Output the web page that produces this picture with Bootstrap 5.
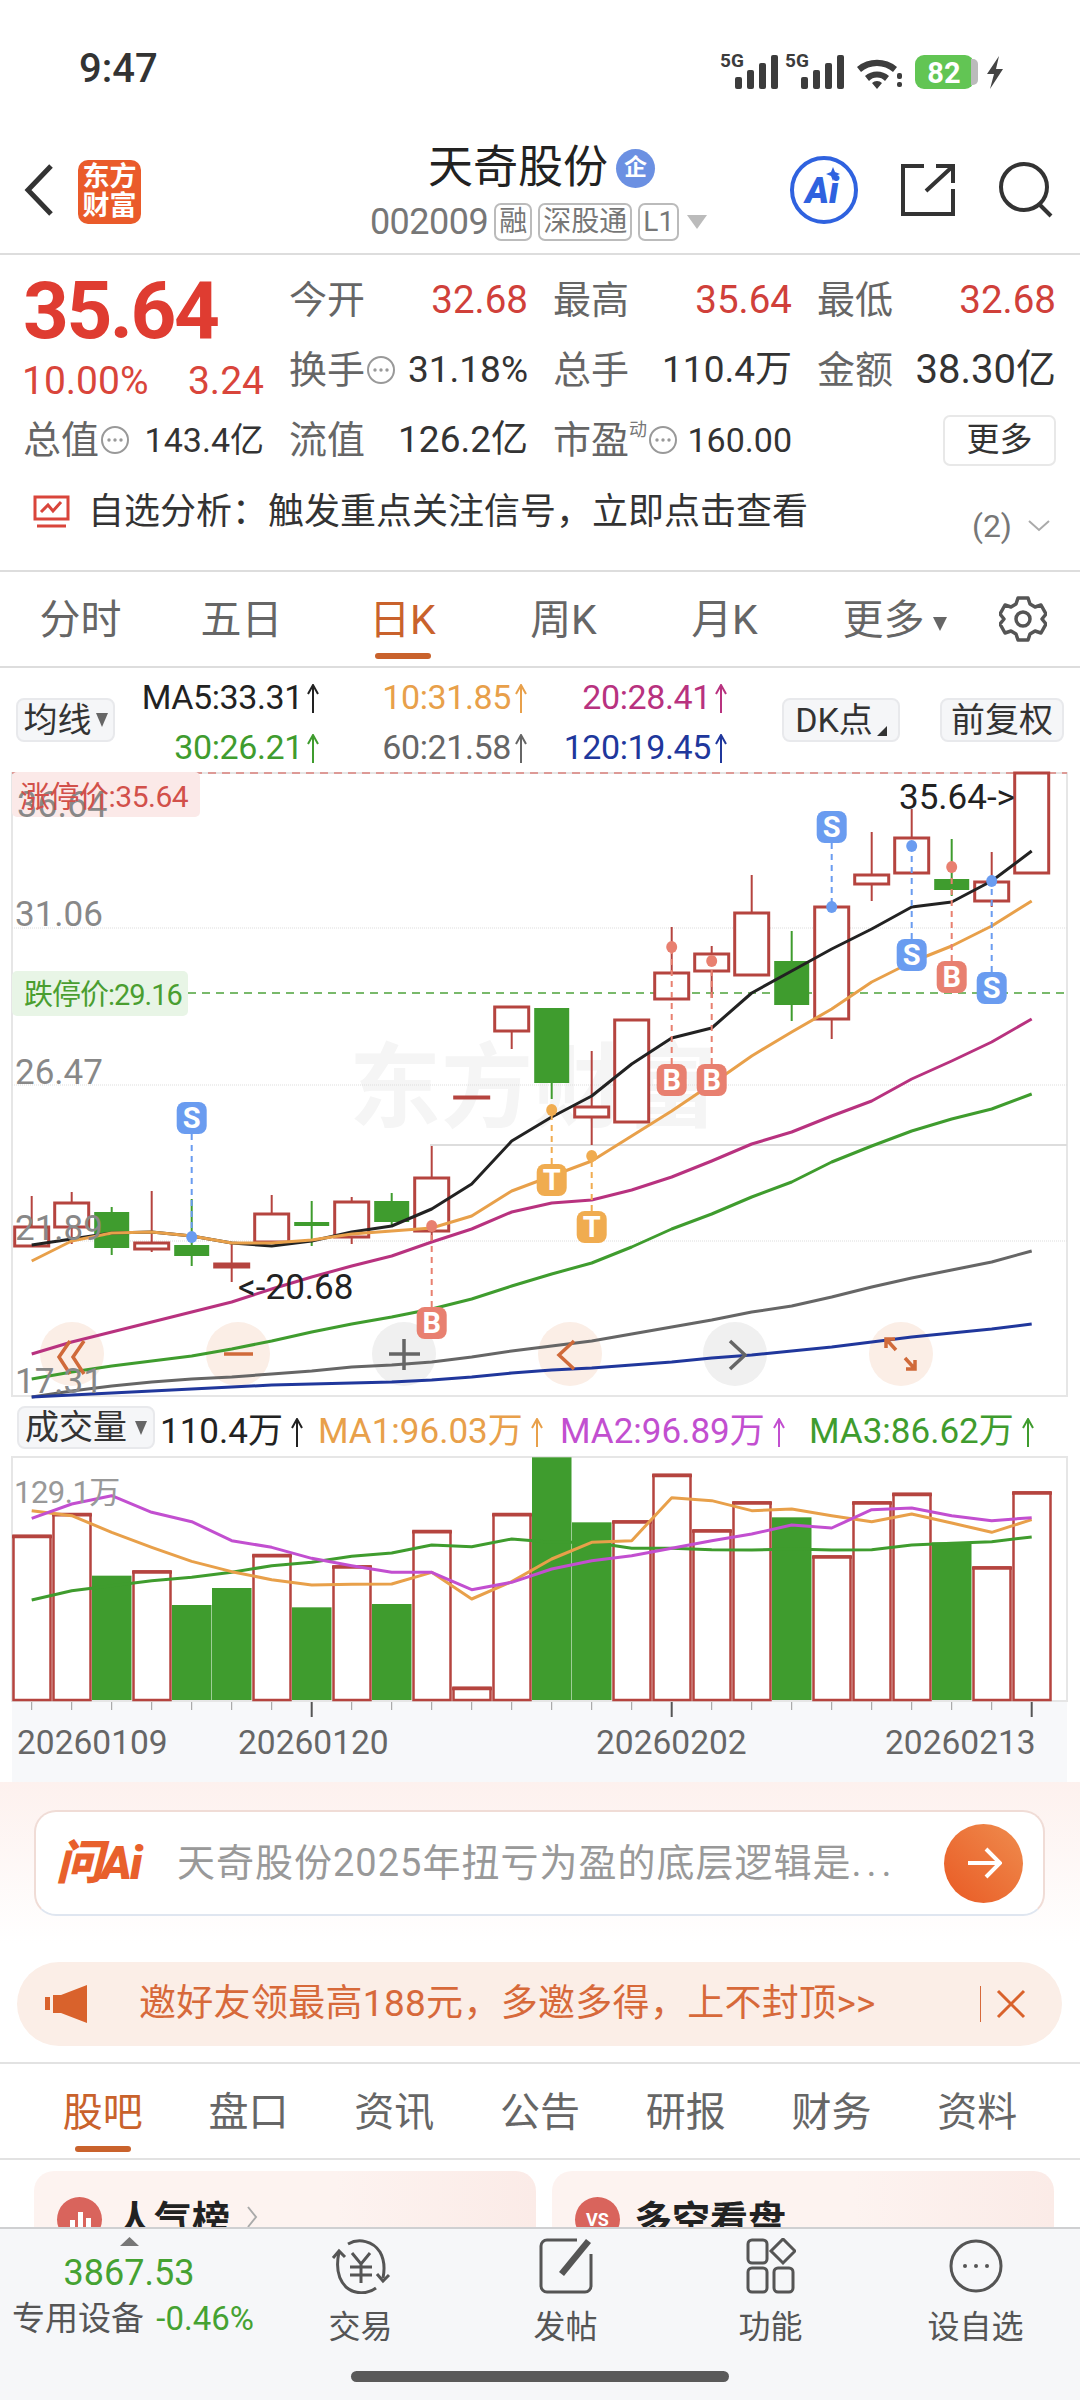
<!DOCTYPE html>
<html lang="zh-CN">
<head>
    <meta charset="UTF-8">
    <meta name="viewport" content="width=device-width, initial-scale=1">
    <title>天奇股份</title>
    <link href="https://cdn.jsdelivr.net/npm/bootstrap@5.3.0/dist/css/bootstrap.min.css" rel="stylesheet">
    <style>
        html, body { width: 1080px; height: 2400px; overflow: hidden; background: #fff; }
        body { font-family: Roboto, "Noto Sans CJK SC", sans-serif; color: #333; position: relative; }
        .status-row { height: 138px; padding: 0 70px 0 79px; }
        .status-icons { overflow: visible; }
        .clock { font-size: 40px; font-weight: 500; color: #333; line-height: 1; }
        .head-row { height: 117px; border-bottom: 2px solid #ddd; }
        .head-side { flex: 1 1 0; }
        .head-tools { padding: 0 27px 12px 0; gap: 41px; }
        .brand-logo { width: 63px; height: 64px; border-radius: 10px; background: #ea5b2a; color: #fff; font-size: 27px; font-weight: 700; line-height: 29px; text-align: center; padding-top: 3px; margin-left: 24px; margin-top: -8px; }
        .back-arrow { margin-top: -12px; }
        .title-line { margin: 4px 0 0 6px; }
        .stock-name { font-size: 45px; line-height: 52px; color: #222; }
        .ent-badge { width: 39px; height: 39px; border-radius: 50%; background: #6b90e2; color: #fff; font-size: 23px; font-weight: 700; margin-left: 8px; }
        .code-line { margin-top: 9px; }
        .stock-code { font-size: 36px; color: #777; line-height: 38px; letter-spacing: -.5px; }
        .code-tag { border: 2px solid #bbb; border-radius: 7px; font-size: 28px; color: #777; line-height: 34px; padding: 0 3px; margin-left: 6px; height: 38px; }
        .quote-grid { display: grid; grid-template-columns: 241px repeat(3, 239px); grid-template-rows: repeat(3, 70px); column-gap: 25px; padding: 10px 0 0 23px; }
        .price-block { grid-row: 1 / span 2; padding-top: 11px; }
        .last-price { font-size: 80px; font-weight: 700; color: #df3c31; line-height: 70px; letter-spacing: -2.500px; }
        .last-change { font-size: 39px; color: #d9453b; line-height: 50px; margin: 10px 0 0 -1px; }
        .stat-cell { font-size: 37px; white-space: nowrap; }
        .stat-label { color: #666; font-size: 38px; }
        .up-val { color: #d0403a; font-size: 38.500px; }
        .val-sm { font-size: 34px; }
        .val-lg { font-size: 40px; }
        .dim-icon { width: 30px; height: 30px; margin-left: 1px; color: #999; flex: none; }
        .more-btn { width: 114px; height: 51px; border: 2px solid #e8e8e8; border-radius: 7px; font-size: 33px; color: #333; margin-left: 126px; }
        .super-mark { font-size: 18px; color: #777; align-self: flex-start; margin-top: 4px; }
        .notice-row { height: 97px; padding: 0 30px 22px 33px; font-size: 36px; color: #333; border-bottom: 2px solid #ddd; }
        .notice-text { margin-left: 18px; }
        .notice-count { font-size: 32px; color: #777; margin: 28px 16px 0 0; }
        .notice-caret { margin-top: 28px; }
        .period-row { height: 96px; border-bottom: 2px solid #ddd; }
        .period-tab { width: 161px; font-size: 41px; color: #666; text-align: center; position: relative; line-height: 96px; }
        .period-tab.on { color: #c9622c; }
        .period-tab.on::after { content: ""; position: absolute; left: 50%; margin-left: -28px; bottom: 7px; width: 56px; height: 6px; border-radius: 3px; background: #c9622c; }
        .period-more { padding-left: 18px; white-space: nowrap; }
        .period-more svg { vertical-align: 3px; }
        .ma-row { height: 104px; padding: 0 16px; position: relative; }
        .pill-btn { background: #f5f6f8; border: 2px solid #e8e9ec; border-radius: 8px; font-size: 34px; color: #333; height: 44px; }
        .pill-ma { width: 99px; }
        .pill-dk { width: 118px; margin-left: 50px; }
        .pill-adj { width: 124px; margin-left: 40px; }
        .pill-vol { width: 138px; height: 43px; }
        .ma-values { width: 610px; margin-left: 7px; font-size: 34px; line-height: 50px; grid-template-columns: 202px 208px 200px; letter-spacing: -.4px; padding-top: 4px; }
        .ma-cell { white-space: nowrap; }
        .tall-arrow { width: 14px; height: 30px; vertical-align: -5px; margin-left: 3px; }
        .c-ma5 { color: #222; } .c-ma10 { color: #e8a04a; } .c-ma20 { color: #b8327f; }
        .c-ma30 { color: #3f9c2e; } .c-ma60 { color: #666; } .c-ma120 { color: #20379c; }
        .chart-frame { height: 625px; display: block; overflow: visible; }
        .vol-head { height: 59px; padding: 9px 0 0 17px; font-size: 35px; white-space: nowrap; }
        .vol-head .tall-arrow { margin-left: 7px; }
        .vol-now { margin-left: 5px; color: #222; width: 158px; }
        .vol-ma1 { color: #e8a04a; width: 242px; }
        .vol-ma2 { color: #c24fd0; width: 249px; }
        .vol-ma3 { color: #3f9c2e; }
        .chart-frame-vol { height: 326px; display: block; overflow: visible; }
        .ai-zone { height: 162px; padding: 28px 35px 0 34px; background: linear-gradient(#fdf1ee, #fff); }
        .ask-box { height: 106px; background: #fff; border: 2px solid #f0dcd6; border-bottom-color: #dfe6f0; border-radius: 22px; padding: 0 20px 0 20px; }
        .ask-logo { width: 96px; font-size: 47px; font-weight: 900; font-style: italic; color: #e8602c; letter-spacing: -2px; white-space: nowrap; }
        .ask-text { margin-left: 25px; font-size: 38px; color: #999; white-space: nowrap; letter-spacing: 1px; }
        .ask-dots { letter-spacing: 5px; }
        .ask-go { width: 79px; height: 79px; border-radius: 50%; background: linear-gradient(45deg, #e95a24, #ef8c4e); flex: none; }
        .promo-bar { height: 84px; margin: 18px 18px 0 17px; border-radius: 42px; background: #fbeee7; color: #d7693a; font-size: 37px; padding: 0 36px 0 28px; white-space: nowrap; }
        .promo-text { margin-left: 52px; letter-spacing: .3px; }
        .promo-sep { width: 1px; height: 36px; background: #d7693a; margin-right: 15px; }
        .info-tabs { margin-top: 16px; height: 98px; padding: 0 30px; border-top: 2px solid #e2e2e2; border-bottom: 2px solid #e2e2e2; }
        .info-tab { flex: 1 1 0; text-align: center; font-size: 40px; color: #666; position: relative; line-height: 98px; }
        .info-tab.on { color: #c9622c; }
        .info-tab.on::after { content: ""; position: absolute; left: 50%; margin-left: -28px; bottom: 6px; width: 56px; height: 6px; border-radius: 3px; background: #c9622c; }
        .promo-cards { padding: 11px 26px 0 34px; gap: 16px; }
        .promo-card { flex: 1 1 0; height: 120px; border-radius: 20px; background: linear-gradient(90deg, #fdf3f0 60%, #fbebe7); padding: 26px 0 0 23px; white-space: nowrap; }
        .card-dot { width: 45px; height: 45px; border-radius: 50%; background: #d9645c; color: #fff; font-size: 18px; font-weight: 700; margin-right: 14px; flex: none; }
        .card-title { font-size: 38px; font-weight: 700; color: #222; line-height: 46px; }
        .bottom-bar { position: absolute; left: 0; right: 0; bottom: 0; height: 173px; background: #f6f7f9; border-top: 2px solid #cfd0d2; }
        .index-mark { position: absolute; left: 120px; top: 8px; }
        .index-cell { width: 258px; text-align: center; white-space: nowrap; }
        .index-val { font-size: 36px; color: #45a232; line-height: 40px; margin-top: 24px; }
        .index-sub { font-size: 33px; color: #555; line-height: 44px; margin-top: 4px; padding-left: 8px; }
        .index-chg { color: #45a232; margin-left: 4px; }
        .bar-item { width: 205px; text-align: center; font-size: 32px; color: #555; }
        .bar-item svg { display: block; margin: 9px auto 9px; }
        .home-pill { position: absolute; left: 351px; bottom: 18px; width: 378px; height: 11px; border-radius: 6px; background: #5a5a5a; }
    </style>
</head>
<body>

    <svg width="0" height="0" class="position-absolute">
        <symbol id="dots" viewBox="0 0 30 30">
            <circle cx="15" cy="15" r="13" fill="none" stroke="currentColor" stroke-width="2"/>
            <circle cx="9" cy="15" r="1.7" fill="currentColor"/><circle cx="15" cy="15" r="1.7" fill="currentColor"/><circle cx="21" cy="15" r="1.7" fill="currentColor"/>
        </symbol>
        <symbol id="up" viewBox="0 0 14 30">
            <path d="M7 29V2M2 10 7 1l5 9" fill="none" stroke="currentColor" stroke-width="2"/>
        </symbol>
        <symbol id="bars" viewBox="0 0 44 34">
            <rect x="0" y="22" width="7" height="12" rx="2"/><rect x="12" y="15" width="7" height="19" rx="2"/><rect x="24" y="8" width="7" height="26" rx="2"/><rect x="36" y="0" width="7" height="34" rx="2"/>
        </symbol>
    </svg>

    <!-- status bar -->
    <div class="status-row d-flex align-items-center justify-content-between">
        <span class="clock">9:47</span>
        <svg class="status-icons" width="290" height="44" viewBox="720 44 290 44" fill="#3c3c3c">
            <text x="720" y="64" font-size="19" font-weight="700" font-family="Roboto">5G</text>
            <use href="#bars" x="735" y="52" width="44" height="34"/>
            <text x="785" y="64" font-size="19" font-weight="700" font-family="Roboto">5G</text>
            <use href="#bars" x="801" y="52" width="44" height="34"/>
            <path d="M857 64a31 31 0 0 1 40 0l-4 5a24 24 0 0 0-32 0zM865 73a18 18 0 0 1 24 0l-4 5a11 11 0 0 0-16 0zM872 80a7 7 0 0 1 10 0l-5 6z"/>
            <rect x="897" y="70" width="5" height="6" rx="2"/><rect x="897" y="79" width="5" height="5" rx="2"/>
            <rect x="915" y="52" width="59" height="34" rx="9" fill="#62c554"/>
            <path d="M971 56h2a5 5 0 0 1 5 5v16a5 5 0 0 1-5 5h-2z" fill="#bbb"/>
            <text x="944" y="80" font-size="29" font-weight="700" fill="#fff" text-anchor="middle" font-family="Roboto">82</text>
            <path d="M999 53 987 71h7l-4 15 13-20h-7z" fill="#444"/>
        </svg>
    </div>

    <!-- header -->
    <div class="head-row d-flex">
        <div class="head-side d-flex align-items-center ps-4">
            <svg class="back-arrow" width="30" height="52" viewBox="0 0 30 52"><path d="M27 2 4 26l23 24" fill="none" stroke="#333" stroke-width="5"/></svg>
            <div class="brand-logo">东方<br>财富</div>
        </div>
        <div class="d-flex flex-column align-items-center">
            <div class="title-line d-flex align-items-center">
                <span class="stock-name">天奇股份</span>
                <span class="ent-badge d-flex align-items-center justify-content-center">企</span>
            </div>
            <div class="code-line d-flex align-items-center">
                <span class="stock-code">002009</span>
                <span class="code-tag">融</span><span class="code-tag">深股通</span><span class="code-tag">L1</span>
                <svg class="ms-2" width="20" height="14" viewBox="0 0 20 14"><path d="M0 0h20L10 14z" fill="#bbb"/></svg>
            </div>
        </div>
        <div class="head-side head-tools d-flex align-items-center justify-content-end">
            <svg width="70" height="70" viewBox="0 0 70 70">
                <circle cx="35" cy="35" r="32" fill="none" stroke="#2f62df" stroke-width="4"/>
                <text x="33" y="48" font-size="36" font-weight="900" font-style="italic" fill="#2f62df" text-anchor="middle" font-family="Roboto">Ai</text>
                <path d="M44 12l2 5 5 2-5 2-2 5-2-5-5-2 5-2z" fill="#2f62df"/>
            </svg>
            <svg width="56" height="54" viewBox="0 0 56 54" fill="none" stroke="#333" stroke-width="4">
                <path d="M24 3H3v48h50V26M26 28 52 4M36 3h17v17"/>
            </svg>
            <svg width="56" height="56" viewBox="0 0 56 56" fill="none" stroke="#333" stroke-width="4">
                <circle cx="27" cy="25" r="23"/><path d="M42 42l12 12"/>
            </svg>
        </div>
    </div>

    <!-- quote -->
    <div class="quote-grid">
        <div class="price-block">
            <div class="last-price">35.64</div>
            <div class="last-change d-flex justify-content-between"><span>10.00%</span><span>3.24</span></div>
        </div>
        <div class="stat-cell d-flex align-items-center justify-content-between"><span class="stat-label">今开</span><span class="up-val">32.68</span></div>
        <div class="stat-cell d-flex align-items-center justify-content-between"><span class="stat-label">最高</span><span class="up-val">35.64</span></div>
        <div class="stat-cell d-flex align-items-center justify-content-between"><span class="stat-label">最低</span><span class="up-val">32.68</span></div>
        <div class="stat-cell d-flex align-items-center justify-content-between"><span class="d-flex align-items-center"><span class="stat-label">换手</span><svg class="dim-icon"><use href="#dots"/></svg></span><span>31.18%</span></div>
        <div class="stat-cell d-flex align-items-center justify-content-between"><span class="stat-label">总手</span><span>110.4万</span></div>
        <div class="stat-cell d-flex align-items-center justify-content-between"><span class="stat-label">金额</span><span class="val-lg">38.30亿</span></div>
        <div class="stat-cell d-flex align-items-center justify-content-between"><span class="d-flex align-items-center"><span class="stat-label">总值</span><svg class="dim-icon"><use href="#dots"/></svg></span><span class="val-sm">143.4亿</span></div>
        <div class="stat-cell d-flex align-items-center justify-content-between"><span class="stat-label">流值</span><span>126.2亿</span></div>
        <div class="stat-cell d-flex align-items-center justify-content-between"><span class="d-flex align-items-center"><span class="stat-label">市盈</span><span class="super-mark">动</span><svg class="dim-icon"><use href="#dots"/></svg></span><span class="val-sm">160.00</span></div>
        <div class="d-flex align-items-center"><span class="more-btn d-flex align-items-center justify-content-center">更多</span></div>
    </div>

    <div class="notice-row d-flex align-items-center">
        <svg width="37" height="33" viewBox="0 0 37 33" fill="none" stroke="#d9453b" stroke-width="3">
            <rect x="2" y="2" width="33" height="22"/><path d="M8 17l7-7 5 6 8-9M4 31h29"/>
        </svg>
        <span class="notice-text flex-grow-1">自选分析：触发重点关注信号，立即点击查看</span>
        <span class="notice-count">(2)</span>
        <svg class="notice-caret" width="22" height="12" viewBox="0 0 22 12"><path d="M1 1l10 9 10-9" fill="none" stroke="#aaa" stroke-width="2"/></svg>
    </div>

    <!-- period tabs -->
    <div class="period-row d-flex">
        <div class="period-tab">分时</div>
        <div class="period-tab">五日</div>
        <div class="period-tab on">日K</div>
        <div class="period-tab">周K</div>
        <div class="period-tab">月K</div>
        <div class="period-tab period-more">更多<svg class="ms-2" width="14" height="14" viewBox="0 0 14 14"><path d="M0 0h14L7 14z" fill="#666"/></svg></div>
        <div class="flex-grow-1 d-flex align-items-center justify-content-center">
            <svg width="48" height="48" viewBox="0 0 48 48" fill="none" stroke="#555" stroke-width="3.500" stroke-linejoin="round">
                <path d="M19 3h10l2 6 5 3 6-2 5 9-4 5 4 5-5 9-6-2-5 3-2 6H19l-2-6-5-3-6 2-5-9 4-5-4-5 5-9 6 2 5-3z"/>
                <circle cx="24" cy="24" r="7"/>
            </svg>
        </div>
    </div>

    <!-- MA legend -->
    <div class="ma-row d-flex align-items-center">
        <span class="pill-btn pill-ma d-flex align-items-center justify-content-center">均线<svg width="12" height="14" viewBox="0 0 12 14" class="ms-1"><path d="M0 0h12L6 14z" fill="#666"/></svg></span>
        <div class="ma-values d-grid">
            <div class="ma-cell c-ma5 text-end pe-1">MA5:33.31<svg class="tall-arrow"><use href="#up"/></svg></div>
            <div class="ma-cell c-ma10 text-end pe-1">10:31.85<svg class="tall-arrow"><use href="#up"/></svg></div>
            <div class="ma-cell c-ma20 text-end pe-1">20:28.41<svg class="tall-arrow"><use href="#up"/></svg></div>
            <div class="ma-cell c-ma30 text-end pe-1">30:26.21<svg class="tall-arrow"><use href="#up"/></svg></div>
            <div class="ma-cell c-ma60 text-end pe-1">60:21.58<svg class="tall-arrow"><use href="#up"/></svg></div>
            <div class="ma-cell c-ma120 text-end pe-1">120:19.45<svg class="tall-arrow"><use href="#up"/></svg></div>
        </div>
        <span class="pill-btn pill-dk d-flex align-items-center justify-content-center">DK点<svg width="10" height="10" viewBox="0 0 10 10" class="ms-1 align-self-end mb-1"><path d="M10 0v10H0z" fill="#333"/></svg></span>
        <span class="pill-btn pill-adj d-flex align-items-center justify-content-center">前复权</span>
    </div>

    <!-- k line chart, filled in by script -->
    <svg id="kline" class="chart-frame" width="1080" height="625" viewBox="0 773 1080 625"></svg>

    <div class="vol-head d-flex align-items-start">
        <span class="pill-btn pill-vol d-flex align-items-center justify-content-center">成交量<svg width="12" height="14" viewBox="0 0 12 14" class="ms-2"><path d="M0 0h12L6 14z" fill="#666"/></svg></span>
        <span class="vol-now">110.4万<svg class="tall-arrow"><use href="#up"/></svg></span>
        <span class="vol-ma1">MA1:96.03万<svg class="tall-arrow"><use href="#up"/></svg></span>
        <span class="vol-ma2">MA2:96.89万<svg class="tall-arrow"><use href="#up"/></svg></span>
        <span class="vol-ma3">MA3:86.62万<svg class="tall-arrow"><use href="#up"/></svg></span>
    </div>

    <svg id="vol" class="chart-frame-vol" width="1080" height="326" viewBox="0 1457 1080 326"></svg>

    <!-- ask ai -->
    <div class="ai-zone">
        <div class="ask-box d-flex align-items-center">
            <span class="ask-logo">问Ai</span>
            <span class="ask-text flex-grow-1">天奇股份2025年扭亏为盈的底层逻辑是<span class="ask-dots">...</span></span>
            <span class="ask-go d-flex align-items-center justify-content-center">
                <svg width="36" height="36" viewBox="0 0 36 36" fill="none" stroke="#fff" stroke-width="4"><path d="M2 18h31M20 4l14 14-14 14"/></svg>
            </span>
        </div>
    </div>

    <div class="promo-bar d-flex align-items-center">
        <svg width="42" height="38" viewBox="0 0 42 38" fill="#d9622c"><path d="M0 12h5v13H0zM8 10h8L42 0v38L16 28H8z"/></svg>
        <span class="promo-text flex-grow-1">邀好友领最高188元，多邀多得，上不封顶&gt;&gt;</span>
        <span class="promo-sep"></span>
        <svg width="30" height="30" viewBox="0 0 30 30" fill="none" stroke="#d9622c" stroke-width="3"><path d="M2 2l26 26M28 2 2 28"/></svg>
    </div>

    <div class="info-tabs d-flex">
        <div class="info-tab on">股吧</div>
        <div class="info-tab">盘口</div>
        <div class="info-tab">资讯</div>
        <div class="info-tab">公告</div>
        <div class="info-tab">研报</div>
        <div class="info-tab">财务</div>
        <div class="info-tab">资料</div>
    </div>

    <div class="promo-cards d-flex">
        <div class="promo-card d-flex align-items-start">
            <span class="card-dot d-flex align-items-center justify-content-center">
                <svg width="24" height="20" viewBox="0 0 24 20" fill="#fff"><rect x="2" y="10" width="5" height="10"/><rect x="10" y="2" width="5" height="18"/><rect x="18" y="8" width="5" height="12"/></svg>
            </span>
            <span class="card-title">人气榜</span>
            <svg class="ms-3 mt-2" width="12" height="24" viewBox="0 0 12 24"><path d="M2 2l8 10-8 10" fill="none" stroke="#aaa" stroke-width="2"/></svg>
        </div>
        <div class="promo-card d-flex align-items-start">
            <span class="card-dot d-flex align-items-center justify-content-center">VS</span>
            <span class="card-title">多空看盘</span>
        </div>
    </div>

    <!-- bottom toolbar -->
    <div class="bottom-bar d-flex">
        <svg class="index-mark" width="19" height="9" viewBox="0 0 19 9"><path d="M0 9 9.500 0 19 9z" fill="#777"/></svg>
        <div class="index-cell">
            <div class="index-val">3867.53</div>
            <div class="index-sub">专用设备 <span class="index-chg">-0.46%</span></div>
        </div>
        <div class="bar-item">
            <svg width="62" height="56" viewBox="0 0 62 56" fill="none" stroke="#555" stroke-width="3">
                <path d="M18 6a24 24 0 0 1 32 8c4 7 5 16 3 26M46 50a24 24 0 0 1-30-1C8 41 6 28 9 14"/>
                <path d="M3 20l6-7 6 6M47 36l6 7 6-6"/>
                <path d="M22 15l9 11 9-11M20 29h22M20 37h22M31 26v19"/>
            </svg>
            交易
        </div>
        <div class="bar-item">
            <svg width="54" height="56" viewBox="0 0 54 56" fill="none" stroke="#555" stroke-width="3">
                <path d="M38 2H8a6 6 0 0 0-6 6v40a6 6 0 0 0 6 6h38a6 6 0 0 0 6-6V16"/>
                <path d="M20 34 47 1l5 4-27 33z" fill="#555" stroke="none"/>
            </svg>
            发帖
        </div>
        <div class="bar-item">
            <svg width="50" height="56" viewBox="0 0 50 56" fill="none" stroke="#555" stroke-width="3">
                <rect x="2" y="2" width="19" height="23" rx="4"/><path d="M37 1l12 12-12 12-12-12z"/>
                <rect x="2" y="30" width="19" height="24" rx="4"/><rect x="28" y="30" width="19" height="24" rx="4"/>
            </svg>
            功能
        </div>
        <div class="bar-item">
            <svg width="54" height="56" viewBox="0 0 54 56" fill="none" stroke="#555" stroke-width="3">
                <circle cx="27" cy="28" r="25"/>
                <circle cx="16" cy="28" r="2" fill="#555" stroke="none"/><circle cx="27" cy="28" r="2" fill="#555" stroke="none"/><circle cx="38" cy="28" r="2" fill="#555" stroke="none"/>
            </svg>
            设自选
        </div>
        <div class="home-pill"></div>
    </div>

    <script>
        const RED = '#b5443f', GREEN = '#3f9c2e', X0 = 31.7, STEP = 40;
        const xOf = i => X0 + STEP * i;
        const line = (ys, color, w = 3) =>
            `<polyline points="${ys.map((y, i) => xOf(i) + ',' + y).join(' ')}" fill="none" stroke="${color}" stroke-width="${w}" stroke-linejoin="round"/>`;
        const label = (x, y, t, color, size = 34, extra = '') =>
            `<text x="${x}" y="${y}" fill="${color}" font-size="${size}" font-family="Roboto, 'Noto Sans CJK SC', sans-serif" ${extra}>${t}</text>`;

        // [wick top, body top, body bottom, wick bottom, green?]
        const candles = [
            [1197, 1228, 1247, 1247], [1193, 1204, 1228, 1245], [1208, 1213, 1249, 1256, 1], [1192, 1244, 1250, 1253],
            [1200, 1246, 1257, 1267, 1], [1245, 1265, 1268, 1283], [1196, 1215, 1243, 1243], [1202, 1223, 1227, 1247, 1],
            [1198, 1203, 1238, 1245], [1194, 1202, 1223, 1227, 1], [1147, 1179, 1232, 1243], [1098, 1098, 1099, 1099],
            [1008, 1008, 1032, 1050], [1009, 1009, 1084, 1100, 1], [1052, 1108, 1118, 1146], [1021, 1021, 1123, 1123],
            [928, 974, 1000, 1000], [947, 955, 972, 999], [876, 914, 976, 976], [932, 962, 1006, 1022, 1],
            [908, 908, 1020, 1040], [833, 876, 885, 902], [810, 839, 874, 874], [840, 880, 891, 897, 1],
            [853, 883, 902, 908], [774, 774, 874, 874]
        ];
        const ma5 = [1246, 1240, 1234, 1233, 1237, 1244, 1247, 1242, 1233, 1227, 1210, 1185, 1142, 1118, 1097, 1065, 1039, 1029, 994, 972, 950, 930, 908, 903, 882, 852];
        const ma10 = [1262, 1242, 1234, 1233, 1237, 1244, 1244, 1241, 1235, 1232, 1229, 1217, 1192, 1177, 1162, 1137, 1112, 1085, 1057, 1033, 1010, 983, 963, 947, 927, 902];
        const ma20 = [1355, 1343, 1333, 1323, 1313, 1303, 1290, 1278, 1267, 1257, 1243, 1230, 1213, 1204, 1201, 1191, 1178, 1162, 1145, 1133, 1117, 1102, 1080, 1062, 1043, 1020];
        const ma30 = [1380, 1373, 1367, 1362, 1357, 1350, 1342, 1333, 1325, 1318, 1310, 1300, 1287, 1275, 1264, 1248, 1230, 1215, 1198, 1183, 1163, 1147, 1132, 1120, 1110, 1095];
        const ma60 = [1398, 1392, 1387, 1383, 1380, 1378, 1375, 1372, 1368, 1366, 1363, 1358, 1352, 1347, 1342, 1335, 1328, 1321, 1313, 1307, 1298, 1288, 1279, 1271, 1263, 1252];
        const ma120 = [1398, 1396, 1394, 1392, 1390, 1388, 1386, 1385, 1384, 1383, 1381, 1378, 1374, 1371, 1369, 1366, 1363, 1359, 1356, 1352, 1348, 1343, 1338, 1334, 1330, 1325];
        // [candle index, letter, badge top, dot y]
        const marks = [
            [4, 'S', 1103, 1238], [20, 'S', 812, 908], [22, 'S', 940, 847], [24, 'S', 973, 882],
            [23, 'B', 962, 868], [16, 'B', 1065, 948], [17, 'B', 1065, 962], [10, 'B', 1308, 1227],
            [13, 'T', 1165, 1111], [14, 'T', 1212, 1157]
        ];
        const markColor = { S: '#6a9cf0', B: '#e88070', T: '#f0ac50' };

        let k = '';
        // frame and watermark
        k += '<rect x="12" y="774" width="1055" height="623" fill="#fff" stroke="#e6e6e6" stroke-width="2"/>';
        k += label(349, 1121, '东方财富', '#f5f5f5', 92, 'font-weight="700"');
        [929, 1086, 1242].forEach(y => { k += `<line x1="12" x2="1067" y1="${y}" y2="${y}" stroke="#ddd" stroke-dasharray="1 1"/>`; });
        k += '<line x1="430" x2="1067" y1="1146" y2="1146" stroke="#ddd" stroke-width="2"/>';
        // limit prices
        k += '<line x1="12" x2="1067" y1="774" y2="774" stroke="#dd9a96" stroke-width="2" stroke-dasharray="8 6"/>';
        k += '<line x1="188" x2="1067" y1="994" y2="994" stroke="#79b96b" stroke-width="2" stroke-dasharray="8 6"/>';
        k += '<rect x="12" y="773" width="188" height="45" rx="5" fill="#fbe9e8"/>';
        k += '<rect x="12" y="972" width="176" height="45" rx="5" fill="#e8f5e6"/>';
        // nav circles
        const nav = [[72, 1], [238, 1], [404, 0], [570, 1], [735, 0], [901, 1]];
        nav.forEach(([cx, warm]) => { k += `<circle cx="${cx}" cy="1355" r="32" fill="${warm ? '#fbeee6' : '#f0f0f0'}"/>`; });
        // candles
        candles.forEach(([wt, bt, bb, wb, down], i) => {
            const x = xOf(i), c = down ? GREEN : RED;
            k += `<line x1="${x}" x2="${x}" y1="${wt}" y2="${wb}" stroke="${c}" stroke-width="2"/>`;
            if (down) k += `<rect x="${x - 17.5}" y="${bt}" width="35" height="${bb - bt}" fill="${c}"/>`;
            else k += `<rect x="${x - 17}" y="${bt}" width="34" height="${bb - bt}" fill="#fff" stroke="${c}" stroke-width="3"/>`;
        });
        k += line(ma5, '#222') + line(ma10, '#e8a04a') + line(ma20, '#b8327f') + line(ma30, GREEN) + line(ma60, '#666') + line(ma120, '#20379c');
        // buy / sell marks
        marks.forEach(([i, ch, top, dot]) => {
            const x = xOf(i), c = markColor[ch], from = dot < top ? top : top + 32;
            k += `<line x1="${x}" x2="${x}" y1="${from}" y2="${dot}" stroke="${c}" stroke-width="2" stroke-dasharray="6 5"/>`;
            k += `<ellipse cx="${x}" cy="${dot}" rx="5.500" ry="6" fill="${c}"/>`;
            k += `<rect x="${x - 15}" y="${top}" width="30" height="32" rx="8" fill="${c}"/>`;
            k += label(x, top + 26, ch, '#fff', 29, 'font-weight="700" text-anchor="middle"');
        });
        // nav icons
        k += '<g fill="none" stroke-width="3.500">'
            + '<path d="M70 1342 59 1358l11 17M84 1342l-11 16 11 17" stroke="#d06a3a"/>'
            + '<path d="M224 1355h29" stroke="#d06a3a"/>'
            + '<path d="M389 1355h31M404 1340v31" stroke="#666"/>'
            + '<path d="M574 1342l-15 14 15 14" stroke="#d06a3a"/>'
            + '<path d="M730 1342l15 14-15 14" stroke="#666"/>'
            + '<path d="M886 1340l10 11M915 1370l-10-11M886 1349v-9h9M915 1361v9h-9" stroke="#d06a3a"/>'
            + '</g>';
        // labels
        k += label(17, 818, '36.64', '#888', 36);
        k += label(20, 808, '涨停价:35.64', '#d2504a', 30, 'letter-spacing="-.5"');
        k += label(24, 1006, '跌停价:29.16', '#4a9e30', 29, 'letter-spacing="-1"');
        k += label(15, 927, '31.06', '#888', 35);
        k += label(15, 1085, '26.47', '#888', 35);
        k += label(15, 1241, '21.89', '#888', 35);
        k += label(15, 1394, '17.31', '#888', 35);
        k += label(899, 810, '35.64-&gt;', '#222', 35);
        k += label(238, 1300, '&lt;-20.68', '#222', 35);
        document.getElementById('kline').innerHTML = k;

        // volume
        const VB = 1701;
        const volTops = [410, 345, 530, 517, 618, 567, 468, 625, 502, 615, 396, 866, 345, 175, 370, 367, 227, 394, 310, 355, 472, 310, 284, 430, 505, 280];
        const volDown = [2, 4, 5, 7, 9, 13, 14, 19, 23];
        const toY = z => 1400 + z / 3;
        const volA = [335, 350, 400, 445, 487, 518, 542, 558, 556, 555, 520, 600, 548, 480, 430, 425, 296, 305, 335, 330, 350, 368, 345, 372, 400, 362];
        const volB = [358, 315, 290, 340, 368, 425, 445, 478, 500, 520, 520, 572, 550, 510, 485, 470, 448, 425, 405, 378, 387, 332, 327, 350, 365, 356];
        const volC = [603, 575, 560, 545, 535, 520, 500, 490, 472, 462, 438, 443, 420, 430, 430, 448, 448, 452, 453, 450, 453, 452, 438, 433, 428, 414];

        let v = '<rect x="12" y="1702" width="1055" height="81" fill="#f7f8fa"/>';
        v += '<rect x="12" y="1458" width="1055" height="244" fill="#fff" stroke="#e6e6e6" stroke-width="2"/>';
        volTops.forEach((z, i) => {
            const top = toY(z), x = 12 + STEP * i;
            if (volDown.includes(i)) v += `<rect x="${x}" y="${top}" width="39.500" height="${VB - top}" fill="${GREEN}"/>`;
            else v += `<rect x="${x + 1.5}" y="${top}" width="37" height="${VB - top}" fill="#fff" stroke="${RED}" stroke-width="2.500"/>`
                + `<line x1="${x}" x2="${x + 40}" y1="${top + 1}" y2="${top + 1}" stroke="${RED}" stroke-width="3"/>`;
        });
        v += line(volC.map(toY), GREEN) + line(volA.map(toY), '#e8a04a') + line(volB.map(toY), '#c24fd0');
        volTops.forEach((z, i) => {
            const big = i === 7 || i === 16 || i === 25;
            v += `<line x1="${xOf(i)}" x2="${xOf(i)}" y1="1703" y2="${big ? 1718 : 1711}" stroke="${big ? '#555' : '#999'}" stroke-width="${big ? 2 : 1}"/>`;
        });
        v += label(14, 1504, '129.1万', '#999', 31, 'letter-spacing="-.5"');
        [[17, '20260109'], [238, '20260120'], [596, '20260202'], [885, '20260213']].forEach(([x, t]) => {
            v += label(x, 1755, t, '#666', 33.5);
        });
        document.getElementById('vol').innerHTML = v;
    </script>
    <script src="https://cdn.jsdelivr.net/npm/bootstrap@5.3.0/dist/js/bootstrap.bundle.min.js"></script>
</body>
</html>
